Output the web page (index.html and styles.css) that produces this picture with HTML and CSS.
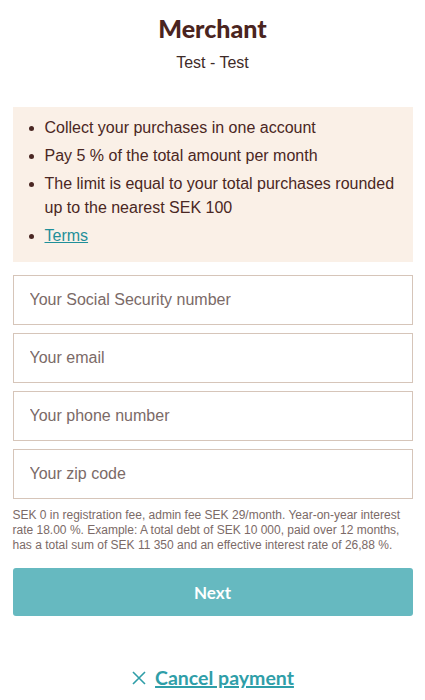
FILE: index.html
```html
<!DOCTYPE html>
<html>
<head>
<meta charset="utf-8">
<link rel="stylesheet" href="styles.css">
</head>
<body>
<div class="page">
  <header class="head">
    <h1 class="title">Merchant</h1>
    <p class="sub">Test - Test</p>
  </header>
  <section class="info">
    <ul class="list">
      <li>Collect your purchases in one account</li>
      <li>Pay 5 % of the total amount per month</li>
      <li>The limit is equal to your total purchases rounded up to the nearest SEK 100</li>
      <li><a class="terms" href="#">Terms</a></li>
    </ul>
  </section>
  <form class="form">
    <input class="field" type="text" placeholder="Your Social Security number">
    <input class="field" type="text" placeholder="Your email">
    <input class="field" type="text" placeholder="Your phone number">
    <input class="field" type="text" placeholder="Your zip code">
    <p class="fine">SEK 0 in registration fee, admin fee SEK 29/month. Year-on-year interest rate 18.00 %. Example: A total debt of SEK 10 000, paid over 12 months, has a total sum of SEK 11 350 and an effective interest rate of 26,88 %.</p>
    <button class="next" type="button">Next</button>
  </form>
  <div class="cancel">
    <svg class="x" width="16" height="16" viewBox="0 0 16 16"><path d="M2 2 L14 14 M14 2 L2 14" stroke="#2f9ea8" stroke-width="1.6" fill="none"/></svg>
    <a class="cancel-link" href="#">Cancel payment</a>
  </div>
</div>
</body>
</html>
```
FILE: styles.css
```css
* { box-sizing: border-box; }
body {
  margin: 0;
  background: #fff;
  font-family: "Liberation Sans", Arial, sans-serif;
  color: #4a2723;
}
.page {
  width: 400px;
  margin: 0 auto;
  padding-top: 13px;
}
.head { text-align: center; }
.title {
  margin: 0;
  font-family: Lato, "Open Sans", sans-serif;
  font-weight: 900;
  font-size: 25px;
  line-height: 30px;
  color: #4a2420;
}
.sub {
  margin: 10px 0 0;
  font-size: 16px;
  line-height: 20px;
  color: #3e2b28;
}
.info {
  margin-top: 34px;
  background: #faf0e7;
  padding: 5px 16px 10px 16px;
}
.list {
  margin: 0;
  padding-left: 16px;
  font-size: 16px;
  line-height: 24px;
}
.list li { margin: 4px 0; }
.terms { color: #1f8f99; }
.form {
  margin-top: 13px;
  display: flex;
  flex-direction: column;
  gap: 8px;
}
.field {
  height: 50px;
  border: 1px solid #d6c5b9;
  border-radius: 0;
  padding: 0 16px;
  font-family: "Liberation Sans", Arial, sans-serif;
  font-size: 16px;
  color: #4a2723;
  outline: none;
}
.field::placeholder { color: #7b6a67; }
.fine {
  margin: 1px 0 0;
  font-size: 12px;
  line-height: 15px;
  color: #7b6a67;
}
.next {
  margin-top: 7px;
  height: 48px;
  border: none;
  border-radius: 3px;
  background: #66b9c0;
  color: #fff;
  font-family: Lato, "Open Sans", sans-serif;
  font-weight: 700;
  font-size: 17px;
}
.cancel {
  margin-top: 50px;
  display: flex;
  justify-content: center;
  align-items: center;
  gap: 8px;
}
.cancel-link {
  font-family: Lato, "Open Sans", sans-serif;
  font-weight: 700;
  font-size: 19.5px;
  color: #2f9ea8;
  text-decoration-thickness: 2px;
}
```
